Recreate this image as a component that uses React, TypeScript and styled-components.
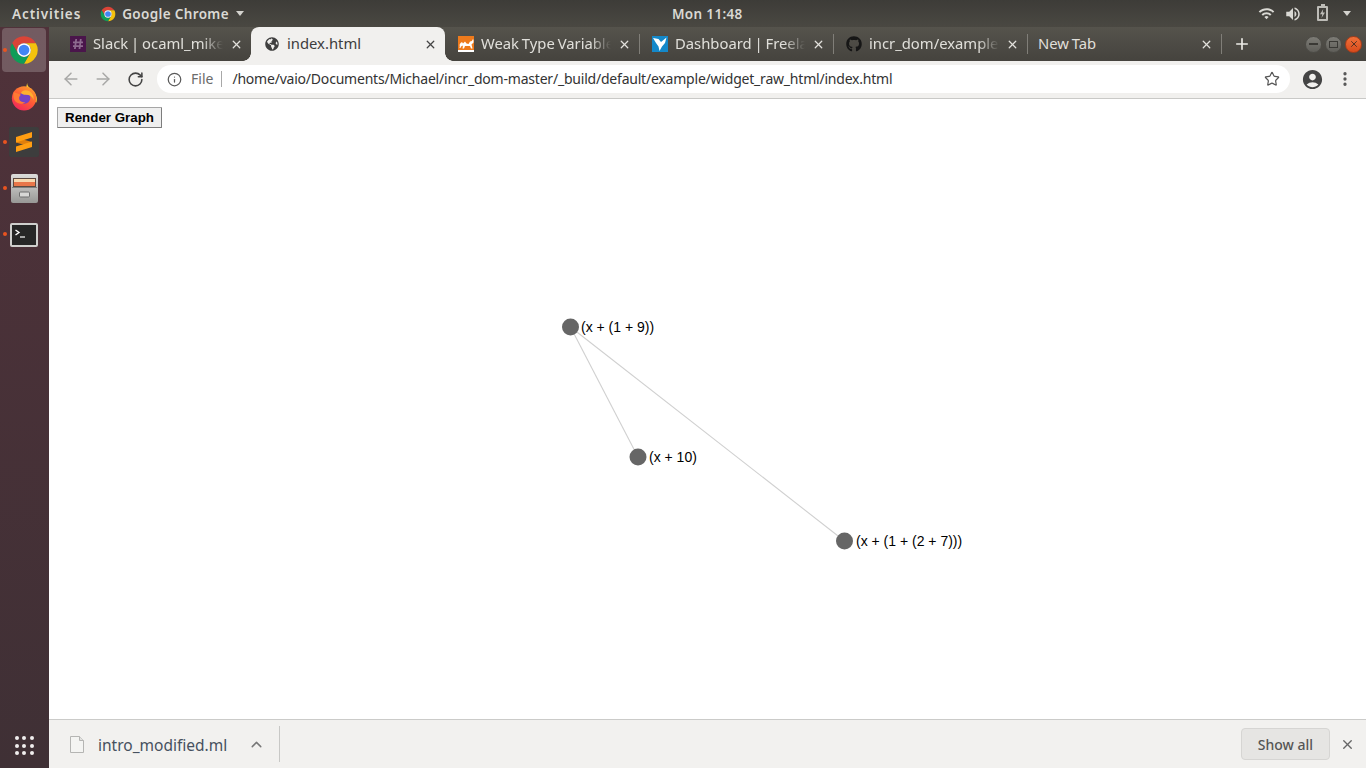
import styled, { createGlobalStyle, css } from "styled-components";
import { ArrowLeft, ArrowRight, ChevronUp, Info, MoreVertical, Plus, RotateCw, Star, X } from "lucide-react";
import { FaGithub, FaGlobeAmericas } from "react-icons/fa";
import { MdAccountCircle, MdVolumeUp, MdWifi } from "react-icons/md";

const UI_FONT = `"Noto Sans", "Open Sans", sans-serif`;

const tabs = [
  { title: "Slack | ocaml_mike", icon: "slack" },
  { title: "index.html", icon: "globe", active: true },
  { title: "Weak Type Variables", icon: "ocaml" },
  { title: "Dashboard | Freelancer", icon: "freelancer" },
  { title: "incr_dom/example", icon: "github" },
  { title: "New Tab", icon: "none" },
];

// node positions are relative to the graph svg
const nodes = [
  { x: 513.5, y: 199, labelX: 524, label: "(x + (1 + 9))" },
  { x: 581, y: 329, labelX: 592, label: "(x + 10)" },
  { x: 787.5, y: 413, labelX: 799, label: "(x + (1 + (2 + 7)))" },
];

function ChromeLogo({ size }: { size: number }) {
  return (
    <svg width={size} height={size} viewBox="0 0 48 48">
      <path fill="#db4437" d="M4.95 13A22 22 0 0 1 43.05 13H24A11 11 0 0 0 14.47 29.5Z" />
      <path fill="#f4c20d" d="M43.05 13A22 22 0 0 1 24 46L33.53 29.5A11 11 0 0 0 24 13Z" />
      <path fill="#0f9d58" d="M24 46A22 22 0 0 1 4.95 13L14.47 29.5A11 11 0 0 0 33.53 29.5Z" />
      <circle cx="24" cy="24" r="11" fill="#fff" />
      <circle cx="24" cy="24" r="8.6" fill="#4285f4" />
    </svg>
  );
}

function FirefoxLogo() {
  return (
    <svg width="27" height="29" viewBox="0 0 30 32">
      <defs>
        <linearGradient id="fx" x1="0.8" y1="0" x2="0.2" y2="1">
          <stop offset="0" stopColor="#ffa02e" />
          <stop offset="0.5" stopColor="#ff5a36" />
          <stop offset="1" stopColor="#f0245f" />
        </linearGradient>
      </defs>
      <path fill="#ffd02e" d="M18 1c0 4 3 5 6 8 4 4 6 9 4 14L16 11c1-4 1-7 2-10z" />
      <circle cx="14.500" cy="18" r="13.500" fill="url(#fx)" />
      <circle cx="15" cy="17.500" r="6.500" fill="#7542c4" />
      <path fill="#ffb02e" d="M16 9c6 0 10 5 9 11-1-4-4-6-9-6-2 0-4-1-5-2 1-2 3-3 5-3z" />
      <path fill="#ff7a33" d="M3 11c-1 5 0 10 4 12 4 2 7 1 9-1-4 1-7-1-7-4 0-2 1-3 2-4z" />
    </svg>
  );
}

function SublimeLogo() {
  return (
    <svg width="30" height="30" viewBox="0 0 30 30">
      <rect width="30" height="30" rx="2" fill="#3d3d3d" />
      <path fill="#e07f0c" d="M7 10.500L23 15v5L7 15.500z" />
      <path fill="#ff9e12" d="M23 5v5.500L7 15.500V10zM23 14.500V20L7 25v-5.500z" />
    </svg>
  );
}

function FilesLogo() {
  return (
    <svg width="27" height="29" viewBox="0 0 27 29">
      <defs>
        <linearGradient id="cabinet" x1="0" y1="0" x2="0" y2="1">
          <stop offset="0" stopColor="#dcdcda" />
          <stop offset="1" stopColor="#989896" />
        </linearGradient>
      </defs>
      <rect width="27" height="29" rx="2" fill="url(#cabinet)" />
      <rect x="2" y="4" width="23" height="9" fill="#5d4a40" />
      <rect x="3" y="5" width="21" height="3" fill="#f6d9b0" />
      <rect x="3" y="8" width="21" height="4" fill="#e9774a" />
      <rect x="1" y="13" width="25" height="1" fill="#7f7f7d" />
      <rect x="8.500" y="18" width="10" height="5" rx="1" fill="#d8d8d6" stroke="#6f6f6f" />
    </svg>
  );
}

function TerminalLogo() {
  return (
    <TerminalSvg width="28" height="24" viewBox="0 0 28 24">
      <rect x="1" y="1" width="26" height="22" rx="1" fill="#262626" stroke="#cfcfcd" strokeWidth="2" />
      <path d="M5.500 7l3.500 2.500-3.500 2.500" fill="none" stroke="#fff" strokeWidth="1.400" />
      <path d="M10 14h5" stroke="#ddd" strokeWidth="1.400" />
    </TerminalSvg>
  );
}

function SlackIcon() {
  return (
    <svg width="16" height="16" viewBox="0 0 16 16">
      <rect width="16" height="16" fill="#4a154b" />
      <path d="M6.200 3l-1.300 10M10.800 3L9.500 13M3 6.300h10M3 10.200h10" stroke="#8d6a8f" strokeWidth="1.800" />
    </svg>
  );
}

function OcamlIcon() {
  return (
    <svg width="16" height="16" viewBox="0 0 16 16">
      <rect width="16" height="16" fill="#ee7a1c" />
      <path fill="#fff" d="M0 14h16v2H0zM1 10l1.500-3 1.500-1 1 1.500 2-2 1.500 2 2 .500 1.500-2.500 2-.500.500-1.500h1v3l-2 2 1 4h-1.500l-1-2.500H7l-1 2.500H4.500l.500-3-2 1-.500 1.500H1.500l.500-3z" />
    </svg>
  );
}

function FreelancerIcon() {
  return (
    <svg width="16" height="16" viewBox="0 0 16 16">
      <rect width="16" height="16" fill="#1488c9" />
      <path fill="#fff" d="M1 2l5.500 1 2.500 3 5.500-4.500-1.500 5.500-3 3.500L7.500 15l-1-4.500L4 7z" />
    </svg>
  );
}

function TabIcon({ name }: { name: string }) {
  if (name === "slack") return <SlackIcon />;
  if (name === "ocaml") return <OcamlIcon />;
  if (name === "freelancer") return <FreelancerIcon />;
  if (name === "github") return <FaGithub size={16} color="#161616" />;
  if (name === "globe") return <FaGlobeAmericas size={14} color="#3f3f3f" />;
  return null;
}

export default function App() {
  return (
    <>
      <GlobalStyle />
      <Screen>
        <TopBar>
          <Activities>Activities</Activities>
          <AppMenu>
            <ChromeLogo size={16} />
            <TopLabel>Google Chrome</TopLabel>
            <Caret />
          </AppMenu>
          <Clock>Mon 11:48</Clock>
          <Status>
            <MdWifi size={17} />
            <MdVolumeUp size={18} />
            <Battery />
            <Caret />
          </Status>
        </TopBar>
        <Desktop>
          <Dock>
            <DockItem $active $running>
              <ChromeLogo size={30} />
            </DockItem>
            <DockItem>
              <FirefoxLogo />
            </DockItem>
            <DockItem $running>
              <SublimeLogo />
            </DockItem>
            <DockItem $running>
              <FilesLogo />
            </DockItem>
            <DockItem $running>
              <TerminalLogo />
            </DockItem>
            <AppsGrid>
              {Array.from({ length: 9 }).map((_, i) => (
                <i key={i} />
              ))}
            </AppsGrid>
          </Dock>
          <Browser>
            <TabStrip>
              {tabs.map((tab, i) => (
                <Tab key={tab.title} $active={tab.active} $divider={i > 1} $plain={tab.icon === "none"}>
                  <TabIconBox $hidden={tab.icon === "none"}>
                    <TabIcon name={tab.icon} />
                  </TabIconBox>
                  <TabTitle $active={tab.active} $fade={tab.icon !== "none" && !tab.active}>
                    {tab.title}
                  </TabTitle>
                  <TabClose $active={tab.active}>
                    <X size={13} strokeWidth={2.4} />
                  </TabClose>
                </Tab>
              ))}
              <NewTabButton>
                <Plus size={18} strokeWidth={2.2} />
              </NewTabButton>
              <WindowControls>
                <WindowButton>
                  <MinusMark />
                </WindowButton>
                <WindowButton>
                  <SquareMark />
                </WindowButton>
                <WindowButton $close>
                  <X size={10} strokeWidth={2} />
                </WindowButton>
              </WindowControls>
            </TabStrip>
            <Toolbar>
              <NavButton $dim>
                <ArrowLeft size={20} strokeWidth={1.8} />
              </NavButton>
              <NavButton $dim>
                <ArrowRight size={20} strokeWidth={1.8} />
              </NavButton>
              <NavButton>
                <RotateCw size={17} strokeWidth={2.2} />
              </NavButton>
              <Omnibox>
                <Info size={15} color="#5a5a5a" strokeWidth={2} />
                <Scheme>File</Scheme>
                <OmniDivider />
                <Url>/home/vaio/Documents/Michael/incr_dom-master/_build/default/example/widget_raw_html/index.html</Url>
                <StarSlot>
                  <Star size={16} strokeWidth={1.8} />
                </StarSlot>
              </Omnibox>
              <Avatar>
                <MdAccountCircle size={23} />
              </Avatar>
              <Kebab>
                <MoreVertical size={18} strokeWidth={2.4} />
              </Kebab>
            </Toolbar>
            <Page>
              <RenderButton>Render Graph</RenderButton>
              <Graph>
                {nodes.slice(1).map((n) => (
                  <line key={n.label} x1={nodes[0].x} y1={nodes[0].y} x2={n.x} y2={n.y} stroke="#d0d0d0" strokeWidth="1.1" />
                ))}
                {nodes.map((n) => (
                  <g key={n.label}>
                    <circle cx={n.x} cy={n.y} r="8.5" fill="#666" />
                    <GraphLabel x={n.labelX} y={n.y + 5}>
                      {n.label}
                    </GraphLabel>
                  </g>
                ))}
              </Graph>
            </Page>
            <DownloadBar>
              <FileIcon viewBox="0 0 14 17">
                <path d="M.5.5h9l4 4v12H.5z" fill="#f4f4f2" stroke="#b5b5b3" />
                <path d="M9.500.5v4h4" fill="#e2e2e0" stroke="#b5b5b3" />
              </FileIcon>
              <FileName>intro_modified.ml</FileName>
              <Chevron>
                <ChevronUp size={17} strokeWidth={2} />
              </Chevron>
              <BarDivider />
              <ShowAll>Show all</ShowAll>
              <BarClose>
                <X size={15} strokeWidth={2.2} />
              </BarClose>
            </DownloadBar>
          </Browser>
        </Desktop>
      </Screen>
    </>
  );
}

const GlobalStyle = createGlobalStyle`
  html, body {
    margin: 0;
    padding: 0;
    background: #fff;
    overflow: hidden;
  }
  * {
    box-sizing: border-box;
  }
`;

const Screen = styled.div`
  width: 1366px;
  height: 768px;
  display: flex;
  flex-direction: column;
  font-family: ${UI_FONT};
`;

const TopBar = styled.div`
  height: 27px;
  flex: none;
  display: flex;
  align-items: center;
  padding-left: 12px;
  background: linear-gradient(#3d3c38, #4a4842);
  color: #dad9d4;
`;

const TopLabel = styled.span`
  font-size: 13.5px;
  font-weight: 600;
  letter-spacing: 0.35px;
`;

const Activities = styled(TopLabel)`
  letter-spacing: 0.9px;
`;

const AppMenu = styled.div`
  display: flex;
  align-items: center;
  gap: 6px;
  margin-left: 19px;
`;

const Caret = styled.span`
  width: 0;
  height: 0;
  margin-left: 1px;
  border-left: 4.5px solid transparent;
  border-right: 4.5px solid transparent;
  border-top: 5px solid #d4d3ce;
`;

const Clock = styled(TopLabel)`
  margin-left: 428px;
`;

const Status = styled.div`
  margin-left: auto;
  display: flex;
  align-items: center;
  gap: 9px;
  padding-right: 15px;
`;

const Battery = styled.span`
  position: relative;
  width: 11px;
  height: 15px;
  margin: 0 5px 0 6px;
  border: 2px solid #bdbcb7;
  border-radius: 1px;
  &::before {
    content: "";
    position: absolute;
    top: -4px;
    left: 1.5px;
    width: 4px;
    height: 2px;
    background: #bdbcb7;
  }
  &::after {
    content: "";
    position: absolute;
    top: 1px;
    left: 1px;
    width: 5px;
    height: 9px;
    background: #bdbcb7;
    clip-path: polygon(65% 0, 0 58%, 45% 58%, 30% 100%, 100% 40%, 55% 40%);
  }
`;

const Desktop = styled.div`
  flex: 1;
  display: flex;
  min-height: 0;
`;

const Dock = styled.div`
  width: 49px;
  flex: none;
  display: flex;
  flex-direction: column;
  align-items: center;
  padding: 1px 1px 0 0;
  background: linear-gradient(#50323a, #3f3035);
`;

const DockItem = styled.div<{ $active?: boolean; $running?: boolean }>`
  position: relative;
  width: 44px;
  height: 44px;
  margin-bottom: 2px;
  border-radius: 4px;
  display: flex;
  align-items: center;
  justify-content: center;
  background: ${(p) => (p.$active ? "rgba(255, 255, 255, 0.2)" : "transparent")};
  &::before {
    content: "";
    display: ${(p) => (p.$running ? "block" : "none")};
    position: absolute;
    left: 1px;
    top: 20px;
    width: 4px;
    height: 4px;
    border-radius: 50%;
    background: #e95420;
  }
`;

const TerminalSvg = styled.svg`
  margin-top: 2px;
`;

const AppsGrid = styled.div`
  margin-top: auto;
  margin-bottom: 13px;
  display: grid;
  grid-template-columns: repeat(3, 4px);
  gap: 3.5px;
  i {
    width: 4px;
    height: 4px;
    border-radius: 50%;
    background: #f0eeee;
  }
`;

const Browser = styled.div`
  flex: 1;
  min-width: 0;
  display: flex;
  flex-direction: column;
`;

const TabStrip = styled.div`
  height: 34px;
  flex: none;
  display: flex;
  align-items: stretch;
  padding-left: 8px;
  background: linear-gradient(#55534c, #45433e);
`;

const activeFlares = css`
  &::before,
  &::after {
    content: "";
    position: absolute;
    bottom: 0;
    width: 8px;
    height: 8px;
  }
  &::before {
    left: -8px;
    background: radial-gradient(circle at 0 0, transparent 7.5px, #f1f0ee 8px);
  }
  &::after {
    right: -8px;
    background: radial-gradient(circle at 100% 0, transparent 7.5px, #f1f0ee 8px);
  }
`;

const tabDivider = css`
  &::after {
    content: "";
    position: absolute;
    right: -1px;
    top: 7px;
    width: 1px;
    height: 20px;
    background: #807e78;
  }
`;

const Tab = styled.div<{ $active?: boolean; $divider?: boolean; $plain?: boolean }>`
  position: relative;
  width: 194px;
  flex: none;
  display: flex;
  align-items: center;
  padding: 0 8px 0 ${(p) => (p.$plain ? 11 : 13)}px;
  border-radius: 8px 8px 0 0;
  background: ${(p) => (p.$active ? "#f1f0ee" : "transparent")};
  ${(p) => p.$active && activeFlares}
  ${(p) => p.$divider && tabDivider}
`;

const TabIconBox = styled.span<{ $hidden?: boolean }>`
  display: ${(p) => (p.$hidden ? "none" : "flex")};
  width: 16px;
  height: 16px;
  align-items: center;
  justify-content: center;
  flex: none;
  margin-right: 7px;
`;

const TabTitle = styled.span<{ $active?: boolean; $fade?: boolean }>`
  flex: 1;
  min-width: 0;
  margin-bottom: 2px;
  overflow: hidden;
  white-space: nowrap;
  font-size: 14.8px;
  word-spacing: -1px;
  color: ${(p) => (p.$active ? "#3d3d3d" : "#e0dfda")};
  mask-image: ${(p) => (p.$fade ? "linear-gradient(to right, #000 84%, transparent 100%)" : "none")};
`;

const TabClose = styled.span<{ $active?: boolean }>`
  display: flex;
  flex: none;
  margin-left: 7px;
  color: ${(p) => (p.$active ? "#444" : "#e2e1dc")};
`;

const NewTabButton = styled.div`
  width: 42px;
  flex: none;
  display: flex;
  align-items: center;
  justify-content: center;
  color: #ecebe6;
`;

const WindowControls = styled.div`
  margin-left: auto;
  padding-right: 4px;
  display: flex;
  align-items: center;
  gap: 3px;
`;

const WindowButton = styled.span<{ $close?: boolean }>`
  width: 17px;
  height: 17px;
  border-radius: 50%;
  display: flex;
  align-items: center;
  justify-content: center;
  color: #3a2a22;
  background: ${(p) => (p.$close ? "linear-gradient(#f0703a, #d84b1c)" : "linear-gradient(#7d7c76, #5f5e59)")};
  border: 1px solid ${(p) => (p.$close ? "#a83c18" : "#4d4c47")};
`;

const MinusMark = styled.i`
  width: 9px;
  height: 1.5px;
  background: #3a3935;
`;

const SquareMark = styled.i`
  width: 9px;
  height: 7px;
  border: 1.5px solid #3a3935;
`;

const Toolbar = styled.div`
  height: 38px;
  flex: none;
  display: flex;
  align-items: center;
  padding: 0 0 1px 6px;
  background: #f1f0ee;
  border-bottom: 1px solid #c9c9c7;
`;

const NavButton = styled.span<{ $dim?: boolean }>`
  width: 32px;
  display: flex;
  justify-content: center;
  color: ${(p) => (p.$dim ? "#a8a8a6" : "#444")};
`;

const Omnibox = styled.div`
  width: 1133px;
  height: 28px;
  margin-left: 6px;
  display: flex;
  align-items: center;
  padding: 0 10px;
  border-radius: 14px;
  background: #fff;
`;

const Scheme = styled.span`
  margin: 0 0 2px 9px;
  font-size: 14px;
  color: #6b6b6b;
`;

const OmniDivider = styled.span`
  width: 1px;
  height: 16px;
  margin: 0 10px 0 8px;
  background: #a8a8a8;
`;

const Url = styled.span`
  margin-bottom: 2px;
  font-size: 14px;
  letter-spacing: -0.21px;
  color: #333;
  white-space: nowrap;
`;

const StarSlot = styled.span`
  margin-left: auto;
  display: flex;
  color: #555;
`;

const Avatar = styled.span`
  display: flex;
  margin-left: 11px;
  color: #444;
`;

const Kebab = styled.span`
  display: flex;
  margin-left: 12px;
  color: #555;
`;

const Page = styled.div`
  flex: 1;
  min-height: 0;
  display: flex;
  flex-direction: column;
  align-items: flex-start;
  padding: 8px 8px 0;
  background: #fff;
`;

const RenderButton = styled.button`
  width: 105px;
  height: 21px;
  flex: none;
  padding: 0;
  font: bold 13.33px "Liberation Sans", Arial, sans-serif;
  color: #000;
  background: #efefef;
  border: 1px solid #a6a6a6;
  border-right-color: #7d7d7d;
  border-bottom-color: #7d7d7d;
  border-radius: 1px;
`;

const Graph = styled.svg`
  flex: 1;
  width: 100%;
  min-height: 0;
`;

const GraphLabel = styled.text`
  font: 14px "Liberation Sans", Arial, sans-serif;
  fill: #000;
`;

const DownloadBar = styled.div`
  height: 49px;
  flex: none;
  display: flex;
  align-items: center;
  padding-left: 21px;
  background: #f2f1ef;
  border-top: 1px solid #cbcbc9;
`;

const FileIcon = styled.svg`
  width: 14px;
  height: 17px;
  flex: none;
`;

const FileName = styled.span`
  margin: 2px 0 0 14px;
  font-size: 15.5px;
  color: #46505e;
`;

const Chevron = styled.span`
  display: flex;
  margin-left: 21px;
  color: #777;
`;

const BarDivider = styled.span`
  width: 1px;
  height: 36px;
  margin-left: 14px;
  background: #c8c8c6;
`;

const ShowAll = styled.button`
  width: 89px;
  height: 32px;
  margin-left: auto;
  padding: 0;
  font: 500 14px ${UI_FONT};
  color: #555;
  background: #e6e5e3;
  border: 1px solid #d6d5d3;
  border-radius: 4px;
`;

const BarClose = styled.span`
  display: flex;
  margin: 0 11px 0 10px;
  color: #666;
`;
